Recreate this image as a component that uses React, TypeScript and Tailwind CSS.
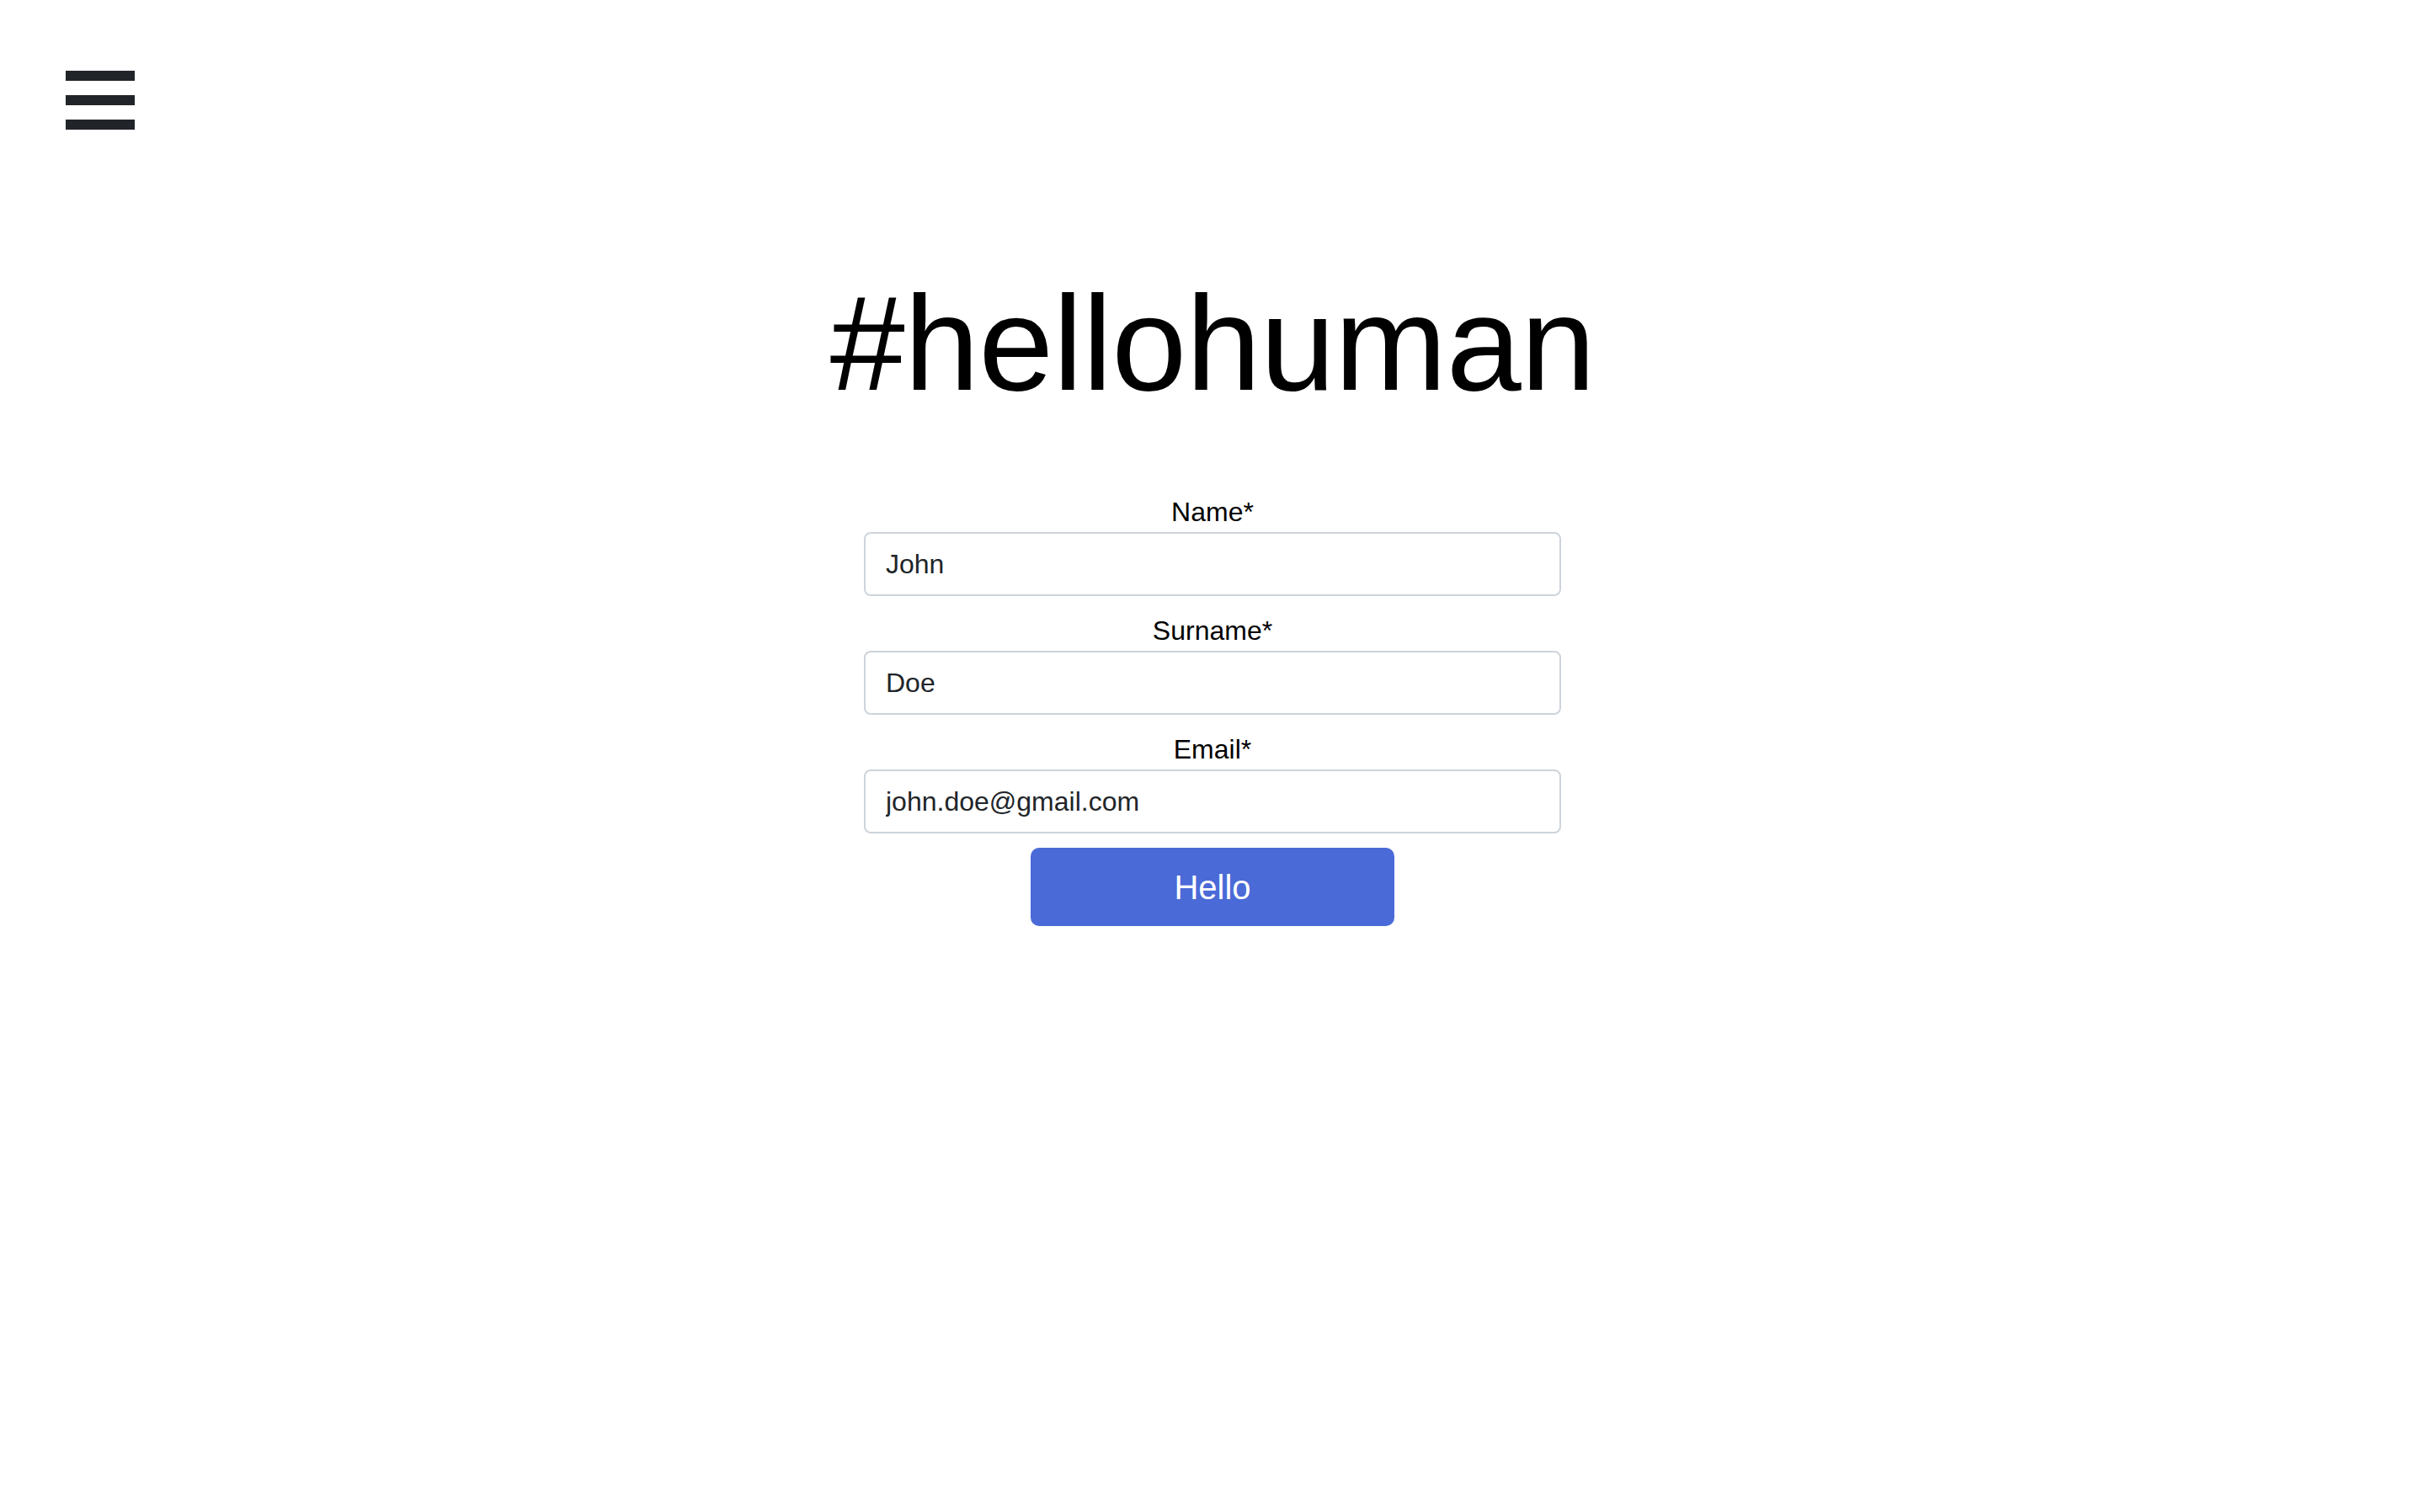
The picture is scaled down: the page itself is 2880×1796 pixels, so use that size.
import { useState } from 'react';

const fields = [
  { label: 'Name*', name: 'name', type: 'text', value: 'John' },
  { label: 'Surname*', name: 'surname', type: 'text', value: 'Doe' },
  { label: 'Email*', name: 'email', type: 'email', value: 'john.doe@gmail.com' },
];

function Hamburger() {
  return (
    <button className="flex flex-col gap-[17px] bg-transparent p-0" aria-label="Menu">
      <span className="block h-[12px] w-[82px] bg-[#212529]" />
      <span className="block h-[12px] w-[82px] bg-[#212529]" />
      <span className="block h-[12px] w-[82px] bg-[#212529]" />
    </button>
  );
}

export default function App() {
  const [values, setValues] = useState<Record<string, string>>(
    Object.fromEntries(fields.map((f) => [f.name, f.value]))
  );

  return (
    <div className="min-h-screen bg-white font-['Liberation_Sans',Arial,sans-serif] text-black">
      <div className="pl-[78px] pt-[84px]">
        <Hamburger />
      </div>

      <h1 className="mt-[174px] text-center text-[160px] font-normal leading-[160px] tracking-[-0.7px] text-black">
        #hellohuman
      </h1>

      <form
        className="mx-auto mt-[96px] flex w-[828px] flex-col"
        onSubmit={(e) => e.preventDefault()}
      >
        {fields.map((f) => (
          <div key={f.name} className="mb-[17px] flex flex-col">
            <label htmlFor={f.name} className="text-center text-[32px] leading-[48px] text-black">
              {f.label}
            </label>
            <input
              id={f.name}
              type={f.type}
              value={values[f.name]}
              onChange={(e) => setValues({ ...values, [f.name]: e.target.value })}
              className="h-[76px] w-full rounded-[8px] border-2 border-[#ced4da] bg-white px-[24px] text-[32px] text-[#212529] outline-none"
            />
          </div>
        ))}
        <button
          type="submit"
          className="mx-auto h-[93px] w-[432px] rounded-[10px] bg-[#4a6ad8] text-[40px] text-white"
        >
          Hello
        </button>
      </form>
    </div>
  );
}
